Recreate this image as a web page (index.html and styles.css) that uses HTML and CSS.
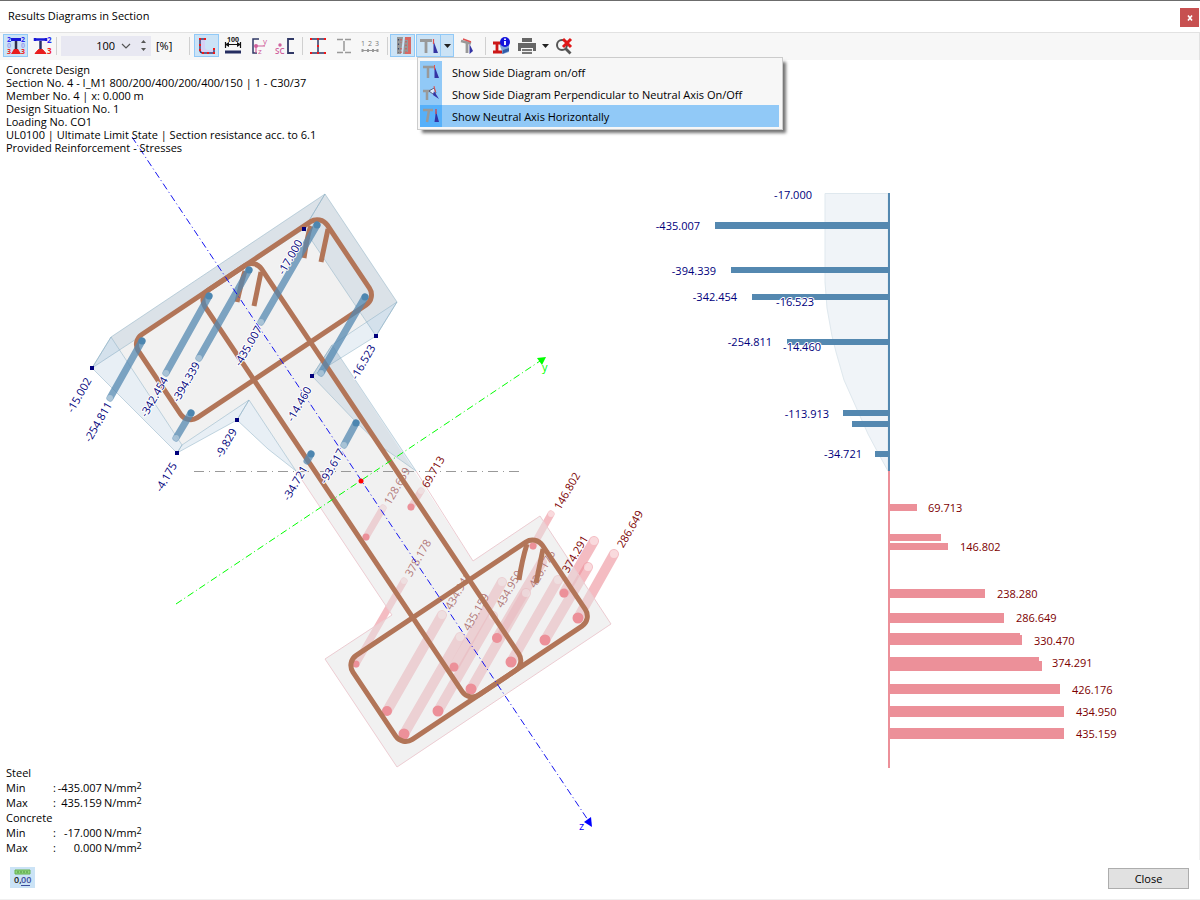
FILE: index.html
```html
<!DOCTYPE html>
<html lang="en">
<head>
<meta charset="utf-8">
<title>Results Diagrams in Section</title>
<link rel="stylesheet" href="styles.css">
</head>
<body>
<div class="window">
  <header class="titlebar">
    <h1 class="title">Results Diagrams in Section</h1>
    <button class="close-x" aria-label="Close window"><svg width="6" height="6" viewBox="0 0 6 6"><path d="M1 .5 5 5.500M5 .5 1 5.500" stroke="#fff" stroke-width="1.600"/></svg></button>
  </header>

  <div class="toolbar" role="toolbar" aria-label="Diagram tools">
    <button class="tool on" aria-label="Show values on all points">
      <svg width="20" height="20" viewBox="0 0 20 20"><path d="M5 3.500h10" stroke="#1818d8" stroke-width="3"/><path d="M10 5v8" stroke="#30304c" stroke-width="2.500"/><path d="M5 18 8 13h4l3 5z" fill="#e81c1c"/><g font-size="7" font-weight="700"><text x="1" y="6" fill="#2a2af0">2</text><text x="15" y="6" fill="#2a2af0">2</text><text x="1" y="12" fill="#9aa0ee">0</text><text x="15" y="12" fill="#9aa0ee">0</text><text x="1" y="18" fill="#f02020">3</text><text x="15" y="18" fill="#f02020">3</text></g></svg>
    </button>
    <button class="tool" aria-label="Show extreme values">
      <svg width="20" height="20" viewBox="0 0 20 20"><path d="M3 3.500h11M3 2v3M14 2v3" stroke="#1818d8" stroke-width="2.500"/><path d="M8.500 5v8" stroke="#283068" stroke-width="2.500"/><path d="M3 17.500 6.500 13.500h4l3.500 4z" fill="#e81c1c" stroke="#e81c1c"/><g font-size="8" font-weight="700"><text x="15" y="7" fill="#2a2af0">2</text><text x="15" y="18" fill="#f02020">3</text></g></svg>
    </button>
    <span class="sep"></span>
    <div class="zoom-field">
      <input class="zoom-value" type="text" value="100" aria-label="Scale in percent">
      <button class="chevron" aria-label="Choose scale"><svg width="10" height="6" viewBox="0 0 10 6"><path d="M1 1l4 4 4-4" fill="none" stroke="#555" stroke-width="1.200"/></svg></button>
      <span class="spinner">
        <button class="spin" aria-label="Increase"><svg width="5" height="3" viewBox="0 0 5 3"><path d="M0 3h5L2.500 0z" fill="#555"/></svg></button>
        <button class="spin" aria-label="Decrease"><svg width="5" height="3" viewBox="0 0 5 3"><path d="M0 0h5L2.500 3z" fill="#555"/></svg></button>
      </span>
    </div>
    <span class="unit">[%]</span>
    <span class="sep"></span>
    <button class="tool on" aria-label="Show section points">
      <svg width="20" height="20" viewBox="0 0 20 20"><path d="M3 3h5v8q0 3 3 3h6v4H6q-3 0-3-3z" fill="#d4d0f4"/><path d="M8 3H3v11q0 3 3 3h11v-4" fill="none" stroke="#3c3c70" stroke-width="1.500"/><g fill="#f01818"><path d="M2 2h2v2H2zM7 2h2v2H7zM2 8h2v2H2zM2 13h2v2H2zM5 16h2v2H5zM10 16h2v2h-2zM16 16h2v2h-2zM16 12h2v2h-2z"/></g></svg>
    </button>
    <button class="tool" aria-label="Show dimensions">
      <svg width="20" height="20" viewBox="0 0 20 20"><path d="M2 8.500h16M2.500 6v6M17.500 6v6" stroke="#111" stroke-width="1.200"/><path d="M2 8.500l4-2.500v5zM18 8.500l-4-2.500v5z" fill="#111"/><path d="M2 16h16" stroke="#252d60" stroke-width="3"/><text x="10" y="6" font-size="7" font-weight="700" text-anchor="middle" fill="#222">100</text></svg>
    </button>
    <button class="tool" aria-label="Show principal axes">
      <svg width="20" height="20" viewBox="0 0 20 20"><path d="M10 3H4v14h4" fill="none" stroke="#303866" stroke-width="1.500"/><path d="M7 10h9M7 10v7" stroke="#d0609c" stroke-width="1.200"/><circle cx="7" cy="10" r="2" fill="#d0609c"/><g font-size="8" fill="#d0609c"><text x="14" y="8">y</text><text x="9" y="18">z</text></g></svg>
    </button>
    <button class="tool" aria-label="Show shear center">
      <svg width="20" height="20" viewBox="0 0 20 20"><path d="M19 3h-6v14h6" fill="none" stroke="#303866" stroke-width="1.800"/><circle cx="5" cy="9" r="1.700" fill="#d0609c"/><text x="0" y="18" font-size="8" font-weight="600" fill="#d0609c">SC</text></svg>
    </button>
    <span class="sep tight"></span>
    <button class="tool" aria-label="Show elements">
      <svg width="20" height="20" viewBox="0 0 20 20"><path d="M3 3h14M3 17h14M10 3v14" stroke="#303866" stroke-width="1.500"/><g fill="#f01818"><path d="M2 2h2v2H2zM9 2h2v2H9zM16 2h2v2h-2zM9 9h2v2H9zM2 16h2v2H2zM9 16h2v2H9zM16 16h2v2h-2z"/></g></svg>
    </button>
    <button class="tool" aria-label="Show section parts">
      <svg width="20" height="20" viewBox="0 0 20 20"><path d="M3 3.500h6M11 3.500h6M3 16.500h6M11 16.500h6M10 5v10" stroke="#999" stroke-width="1.500"/></svg>
    </button>
    <button class="tool" aria-label="Show numbering">
      <svg width="20" height="20" viewBox="0 0 20 20"><path d="M2 14.500h16" stroke="#999"/><path d="M1.500 13h2v3h-2zM7 13h2v3H7zM12 13h2v3h-2zM16.500 13h2v3h-2z" fill="#999"/><g font-size="7" fill="#777"><text x="1" y="10">1</text><text x="8" y="10">2</text><text x="15" y="10">3</text></g></svg>
    </button>
    <span class="sep tight"></span>
    <button class="tool on" aria-label="Show reinforcement">
      <svg width="20" height="20" viewBox="0 0 20 20"><path d="M4 1h6L8 18H4zM12 1h6v17h-8z" fill="#979797"/><path d="M18 1v17h-6v-2h3V4h-3V1z" fill="#d86864"/><path d="M5.500 3v14" stroke="#3c4664" stroke-width="1.200" stroke-dasharray="1.500 3"/><path d="M8 3v4M8 12v5M13 5v11" stroke="#d05050" stroke-width="1.200" stroke-dasharray="1.500 2"/></svg>
    </button>
    <div class="split">
      <button class="tool on" aria-label="Side diagram">
        <svg width="20" height="20" viewBox="0 0 20 20"><path d="M1 4.500h12M7 4v13" stroke="#999" stroke-width="2.800"/><path d="M14.500 5 19 17h-4.500z" fill="#3434a4"/><path d="M14.500 3v5" stroke="#e05050" stroke-width="1.200"/></svg>
      </button>
      <button class="drop on" aria-label="Side diagram options" aria-expanded="true"><svg width="7" height="4" viewBox="0 0 7 4"><path d="M0 0h7L3.500 4z" fill="#222"/></svg></button>
      <div class="menu" role="menu">
        <button class="item" role="menuitem"><span class="mark"><svg width="20" height="20" viewBox="0 0 20 20"><path d="M2 5h11M7 4v12" stroke="#999" stroke-width="2.500"/><path d="M13.500 4 18 16h-4.500z" fill="#3434a4"/><path d="M13.500 3v5" stroke="#e05050"/></svg></span>Show Side Diagram on/off</button>
        <button class="item" role="menuitem"><span class="mark"><svg width="20" height="20" viewBox="0 0 20 20"><path d="M2 7h10M6 7v9" stroke="#999" stroke-width="2.500"/><path d="M8 7l5-3 2 5-3 1z" fill="#dfeffc" stroke="#446" stroke-width=".8"/><path d="M13 7l5 8-6-4z" fill="#3434a4"/><path d="M13 2l1.500 6" stroke="#e05050"/></svg></span>Show Side Diagram Perpendicular to Neutral Axis On/Off</button>
        <button class="item current" role="menuitem"><span class="mark"><svg width="20" height="20" viewBox="0 0 20 20"><path d="M2 4h10M8 4 6 16" stroke="#999" stroke-width="2.500"/><path d="M15 5 18 16h-4.500z" fill="#3434a4"/><path d="M15 3v5" stroke="#c05060" stroke-width="1.500"/></svg></span>Show Neutral Axis Horizontally</button>
      </div>
    </div>
    <button class="tool" aria-label="Rotate diagram">
      <svg width="20" height="20" viewBox="0 0 20 20"><path d="M3 5l10 2.500M9 6v11" stroke="#999" stroke-width="2.800"/><path d="M11.500 8l3.500 7-3.500 3z" fill="#3434a4"/><path d="M5 3l8 3" stroke="#e05050" stroke-width="1.500"/></svg>
    </button>
    <span class="sep tight"></span>
    <button class="tool" aria-label="Section information">
      <svg width="20" height="20" viewBox="0 0 20 20"><path d="M8 7h10v9l-6 2z" fill="#7fa4d8"/><path d="M12 14l6-2v3l-7 3z" fill="#315ca8"/><path d="M2 7h8M6 7v9M2 16h9" stroke="#cc1717" stroke-width="2.800"/><circle cx="14" cy="6" r="5" fill="#1414dc"/><path d="M14 5v4M14 2.500v1.500" stroke="#fff" stroke-width="1.800"/></svg>
    </button>
    <button class="tool" aria-label="Print">
      <svg width="20" height="20" viewBox="0 0 20 20"><path d="M5 2h10v4H5zM1 7h18v8h-3v-3H4v3H1z" fill="#666"/><path d="M5 13h10v5H5z" fill="#777"/><path d="M5 15.500h10" stroke="#eee"/></svg>
    </button>
    <button class="drop slim" aria-label="Print options"><svg width="7" height="4" viewBox="0 0 7 4"><path d="M0 0h7L3.500 4z" fill="#222"/></svg></button>
    <button class="tool" aria-label="Reset zoom">
      <svg width="20" height="20" viewBox="0 0 20 20"><circle cx="8" cy="9" r="5" fill="none" stroke="#555" stroke-width="2"/><path d="M11.500 12.500l5 5" stroke="#555" stroke-width="2.800"/><path d="M9 3l8 8M17 3l-8 8" stroke="#e01818" stroke-width="3"/></svg>
    </button>
  </div>

  <main class="stage">
    <svg class="plot" viewBox="0 60 1200 800" role="img" aria-label="Stress diagrams of the section">
      <!-- tension bars, seen through the section face -->
      <g class="rod tension">
        <path d="M411 507 421 491M366 537 383 508M356 664 404 581M533 546 551 514"/>
      </g>
      <g class="rod tension thick">
        <path d="M387 711 442 615"/><path d="M404 734 460 637"/><path d="M438 711 493 616"/><path d="M454 667 502 582"/><path d="M471 689 526 593"/><path d="M497 638 542 562"/><path d="M511 662 558 580"/><path d="M545 640 588 567"/><path d="M564 593 594 541"/><path d="M578 618 614 554"/>
      </g>
      <g class="cap">
        <circle cx="421" cy="491" r="3"/><circle cx="383" cy="508" r="3"/><circle cx="404" cy="581" r="3"/><circle cx="551" cy="514" r="3"/>
        <circle cx="442" cy="615" r="4"/><circle cx="460" cy="637" r="4"/><circle cx="493" cy="616" r="4"/><circle cx="502" cy="582" r="4"/><circle cx="526" cy="593" r="4"/><circle cx="558" cy="580" r="4"/><circle cx="588" cy="567" r="4"/><circle cx="594" cy="541" r="4"/><circle cx="614" cy="554" r="4"/>
      </g>
      <g class="label red slanted">
        <text transform="translate(397 486) rotate(-60)" dy="4">128.659</text>
        <text transform="translate(418 558) rotate(-60)" dy="4">378.178</text>
        <text transform="translate(458 591) rotate(-60)" dy="4">434.941</text>
        <text transform="translate(476 612) rotate(-60)" dy="4">435.159</text>
        <text transform="translate(509 589) rotate(-60)" dy="4">434.950</text>
        <text transform="translate(542 569) rotate(-60)" dy="4">426.176</text>
      </g>

      <!-- section face and outline -->
      <path class="face" d="M111 337 325 194 397 302 332 345 473 561 540 516 611 624 397 767 325 659 392 615 249 400 182 445z"/>
      <path class="edge" d="M416 471 473 561 540 516 611 624 397 767 325 659 392 615 296 471"/>

      <!-- concrete stress surfaces -->
      <g class="stress">
        <path d="M111 337 325 194 304 229 92 368z"/>
        <path d="M325 194 397 302 376 336 304 229z"/>
        <path d="M397 302 332 345 312 376 376 336z"/>
        <path d="M332 345 416 471 382 447 356 422 312 376z"/>
        <path d="M111 337 182 445 177 453 92 368z"/>
        <path d="M182 445 249 400 237 420 177 453z"/>
        <path d="M249 400 296 471 268 449 237 420z"/>
      </g>
      <path class="neutral" d="M194 471.500H519"/>

      <g class="dots">
        <circle cx="411" cy="507" r="3.500"/><circle cx="366" cy="537" r="3.500"/><circle cx="356" cy="664" r="3.500"/><circle cx="533" cy="546" r="3.500"/>
        <circle cx="387" cy="711" r="5"/><circle cx="404" cy="734" r="5.500"/><circle cx="438" cy="711" r="5.500"/><circle cx="454" cy="667" r="4.500"/><circle cx="471" cy="689" r="5.500"/><circle cx="497" cy="638" r="5"/><circle cx="511" cy="662" r="5.500"/><circle cx="545" cy="640" r="5.500"/><circle cx="564" cy="593" r="4.500"/><circle cx="578" cy="618" r="5.500"/>
      </g>

      <!-- stirrups in the local axes of the section -->
      <g class="stirrup">
        <g transform="translate(111 337) rotate(-33.750)">
          <rect x="15" y="15" width="227" height="100" rx="12"/>
          <rect x="15" y="401" width="228" height="101" rx="12"/>
          <rect x="95" y="15" width="68" height="487" rx="12"/>
        </g>
        <path d="M311 226Q308 232 304 258M328 229 321 262M245 271Q242 280 237 302M261 272 254 306M527 544Q522 560 519 580M543 549 536 583"/>
      </g>

      <g class="rod compression">
        <path d="M142 341 110 398"/><path d="M209 296 166 373"/><path d="M249 270 199 358"/><path d="M317 225 261 322"/><path d="M365 297 321 373"/><path d="M191 413 176 438"/><path d="M311 454 307 461"/><path d="M356 423 344 445"/>
      </g>
      <g class="cap soft">
        <circle cx="110" cy="398" r="3"/><circle cx="166" cy="373" r="3"/><circle cx="199" cy="358" r="3"/><circle cx="261" cy="322" r="3"/><circle cx="321" cy="373" r="3"/><circle cx="176" cy="438" r="3"/><circle cx="344" cy="445" r="3"/>
      </g>
      <g class="heads">
        <circle cx="142" cy="341" r="3.500"/><circle cx="209" cy="296" r="3.500"/><circle cx="249" cy="270" r="3.500"/><circle cx="317" cy="225" r="3.500"/><circle cx="365" cy="297" r="3.500"/><circle cx="191" cy="413" r="3.500"/><circle cx="311" cy="454" r="3.500"/><circle cx="356" cy="423" r="3.500"/>
      </g>

      <!-- section axes -->
      <path class="axis-y" d="M176 604 540 361"/>
      <path d="M546 357 537 358 542 365z" fill="#0f0"/>
      <path class="axis-z" d="M132 137 588 820"/>
      <path d="M592 827 591 817 584 822z" fill="#00f"/>
      <circle cx="361" cy="481" r="2.500" fill="#f00"/>
      <g class="label"><text x="542" y="371" fill="#0f0">y</text><text x="579" y="830" fill="#00f">z</text></g>

      <path class="points" d="M90 366h4v4h-4zM302 227h4v4h-4zM374 334h4v4h-4zM310 374h4v4h-4zM235 418h4v4h-4zM175 451h4v4h-4z"/>
      <g class="label blue slanted">
        <text transform="translate(79 395) rotate(-60)" dy="4">-15.002</text>
        <text transform="translate(98 422) rotate(-60)" dy="4">-254.811</text>
        <text transform="translate(154 397) rotate(-60)" dy="4">-342.454</text>
        <text transform="translate(186 382) rotate(-60)" dy="4">-394.339</text>
        <text transform="translate(166 477) rotate(-60)" dy="4">-4.175</text>
        <text transform="translate(226 443) rotate(-60)" dy="4">-9.829</text>
        <text transform="translate(290 257) rotate(-60)" dy="4">-17.000</text>
        <text transform="translate(248 346) rotate(-60)" dy="4">-435.007</text>
        <text transform="translate(363 362) rotate(-60)" dy="4">-16.523</text>
        <text transform="translate(299 404) rotate(-60)" dy="4">-14.460</text>
        <text transform="translate(332 466) rotate(-60)" dy="4">-93.617</text>
        <text transform="translate(295 483) rotate(-60)" dy="4">-34.721</text>
      </g>
      <g class="label red slanted">
        <text transform="translate(433 472) rotate(-60)" dy="4">69.713</text>
        <text transform="translate(575 554) rotate(-60)" dy="4">374.291</text>
        <text transform="translate(567 491) rotate(-60)" dy="4">146.802</text>
        <text transform="translate(630 529) rotate(-60)" dy="4">286.649</text>
      </g>

      <!-- side diagram -->
      <path class="area" d="M825 193.500h63V471L876 449 868 434 856 407 844 380 836 352 832 336 827 308 825 282z"/>
      <g fill="#5488b0">
        <path d="M888 193h2v278h-2z"/>
        <path d="M715 222h174v7H715zM731 267h158v6H731zM752 294h137v6H752zM787 339h102v6H787zM843 410h46v6h-46zM852 421h37v6h-37zM875 451h14v6h-14z"/>
      </g>
      <g fill="#ec9099">
        <path d="M888 471h2v297h-2z"/>
        <path d="M889 504h28v7h-28zM889 534h52v7h-52zM889 543h59v7h-59zM889 589h96v9h-96zM889 613h115v10H889zM889 633h131v2h2v10H889zM889 657h150v4h3v10H889zM889 684h171v10H889zM889 706h175v11H889zM889 728h175v11H889z"/>
      </g>
      <g class="label blue ends">
        <text x="812" y="199">-17.000</text><text x="700" y="230">-435.007</text><text x="716" y="275">-394.339</text><text x="737" y="301">-342.454</text><text x="814" y="306">-16.523</text><text x="772" y="346">-254.811</text><text x="821" y="351">-14.460</text><text x="829" y="418">-113.913</text><text x="862" y="458">-34.721</text>
      </g>
      <g class="label red">
        <text x="928" y="512">69.713</text><text x="960" y="551">146.802</text><text x="997" y="598">238.280</text><text x="1016" y="622">286.649</text><text x="1034" y="645">330.470</text><text x="1052" y="667">374.291</text><text x="1072" y="694">426.176</text><text x="1076" y="716">434.950</text><text x="1076" y="738">435.159</text>
      </g>
    </svg>

    <section class="info">
      <p>Concrete Design</p>
      <p>Section No. 4 - I_M1 800/200/400/200/400/150 | 1 - C30/37</p>
      <p>Member No. 4 | x: 0.000 m</p>
      <p>Design Situation No. 1</p>
      <p>Loading No. CO1</p>
      <p>UL0100 | Ultimate Limit State | Section resistance acc. to 6.1</p>
      <p>Provided Reinforcement - Stresses</p>
    </section>

    <table class="legend">
      <tbody>
        <tr><th colspan="4">Steel</th></tr>
        <tr><th>Min</th><td>:</td><td class="num">-435.007</td><td class="dim">N/mm<sup>2</sup></td></tr>
        <tr><th>Max</th><td>:</td><td class="num">435.159</td><td class="dim">N/mm<sup>2</sup></td></tr>
        <tr><th colspan="4">Concrete</th></tr>
        <tr><th>Min</th><td>:</td><td class="num">-17.000</td><td class="dim">N/mm<sup>2</sup></td></tr>
        <tr><th>Max</th><td>:</td><td class="num">0.000</td><td class="dim">N/mm<sup>2</sup></td></tr>
      </tbody>
    </table>
  </main>

  <footer class="footer">
    <button class="decimals" aria-label="Units and decimal places">
      <svg width="19" height="18" viewBox="0 0 19 18"><path d="M2 1h15v4H2z" fill="#8ed47c" stroke="#64b050"/><path d="M5 2v2M8 2v2M11 2v2M14 2v2" stroke="#4c9440"/><text x="1" y="14" font-size="9" font-weight="600" fill="#222">0,</text><text x="8" y="14" font-size="9" font-weight="600" fill="#3c4c9c">00</text><path d="M8 16.500h9" stroke="#3c4c9c"/></svg>
    </button>
    <button class="close">Close</button>
  </footer>
</div>
</body>
</html>
```
FILE: styles.css
```css
* { box-sizing: border-box; }

body {
  margin: 0;
  font: 11px/13px "Open Sans", "Noto Sans", sans-serif;
  color: #000;
  background: #fff;
}

button {
  margin: 0;
  padding: 0;
  border: 0;
  background: transparent;
  font: inherit;
  color: inherit;
}

svg {
  display: block;
  overflow: visible;
}

.window {
  display: flex;
  flex-direction: column;
  min-height: 100vh;
  border-top: 1px solid #6c6c6c;
}

.titlebar {
  display: flex;
  align-items: center;
  justify-content: space-between;
  height: 31px;
  padding: 0 1px 2px 8px;
}

.title {
  margin: 0;
  font-size: 11px;
  font-weight: 400;
}

.close-x {
  display: grid;
  place-items: center;
  width: 19px;
  height: 19px;
  margin-top: 4px;
  background: #c75050;
}

/* toolbar */
.toolbar {
  display: flex;
  align-items: center;
  gap: 1px;
  height: 28px;
  padding: 0 3px 2px;
  border-top: 1px solid #e2e2e2;
  border-right: 1px solid #e2e2e2;
  background: #f7f7f7;
}

.tool {
  display: grid;
  place-items: center;
  width: 25px;
  height: 23px;
  border: 1px solid transparent;
}

.drop {
  display: grid;
  place-items: center;
  width: 13px;
  height: 23px;
  border: 1px solid transparent;
}

.slim { width: 10px; }

.on {
  border-color: #91c9f7;
  background: #cbe3f6;
}

.sep {
  width: 1px;
  height: 18px;
  margin: 0 3px 0 1px;
  background: #d0d0d0;
}

.tight { margin: 0 1px 0 4px; }

.zoom-field {
  display: flex;
  align-items: center;
  width: 90px;
  height: 20px;
  background: #e8e8f2;
}

.zoom-value {
  flex: 1;
  min-width: 0;
  padding: 0;
  border: 0;
  background: transparent;
  font: inherit;
  text-align: right;
}

.chevron {
  display: grid;
  place-items: center;
  width: 22px;
  height: 20px;
}

.spinner {
  display: flex;
  flex-direction: column;
  gap: 1px;
  width: 14px;
  padding-right: 2px;
}

.spin {
  display: grid;
  place-items: center;
  height: 7px;
}

.unit {
  width: 35px;
  padding-left: 4px;
}

.split {
  position: relative;
  display: flex;
}

.split .drop { border-left: 0; }

.menu {
  position: absolute;
  z-index: 2;
  top: 100%;
  left: 1px;
  width: 366px;
  padding: 3px 2px 2px;
  border: 1px solid #ccc;
  background: #f7f7f7;
  box-shadow: 4px 4px 3px -1px rgba(0, 0, 0, 0.55);
}

.item {
  display: flex;
  align-items: center;
  gap: 10px;
  width: 359px;
  height: 22px;
  white-space: nowrap;
  text-align: left;
}

.mark {
  display: grid;
  place-items: center;
  width: 22px;
  height: 22px;
  background: #91c9f7;
}

.current { background: #91c9f7; }
.current .mark { background: #56b0fa; }

/* drawing area */
.stage {
  display: grid;
  flex: 1;
  grid-template-rows: minmax(0, 1fr);
  min-height: 0;
  box-shadow: inset -1px 0 #f0f0f0;
}

.plot,
.info,
.legend { grid-area: 1 / 1; }

.plot {
  width: 100%;
  height: 100%;
}

.info {
  align-self: start;
  justify-self: start;
  padding: 3px 6px;
}

.info p { margin: 0; }

.legend {
  align-self: end;
  justify-self: start;
  margin: 0 6px 5px;
  border-collapse: collapse;
  line-height: 15px;
}

.legend th,
.legend td {
  height: 15px;
  padding: 0;
  font-weight: 400;
  text-align: left;
}

.legend tr > th { width: 47px; }
.legend .num { width: 46px; text-align: right; }
.legend .dim { padding-left: 2px; }
.legend sup { font-size: 9px; line-height: 1px; vertical-align: 3px; }

.face { fill: #e4e4e4; fill-opacity: 0.5; }
.edge { fill: none; stroke: #ecccd2; }
.stress { fill: #5080b0; fill-opacity: 0.13; stroke: #8cb0c4; stroke-opacity: 0.5; }
.area { fill: #f0f4f8; stroke: #dfe8ee; }
.neutral { fill: none; stroke: #999; stroke-dasharray: 10 5 1 5; }

.rod { fill: none; stroke-linecap: round; }
.tension { stroke: #ec9099; stroke-opacity: 0.6; stroke-width: 7px; }
.thick { stroke-width: 10px; }
.compression { stroke: #5488b0; stroke-opacity: 0.75; stroke-width: 7px; }
.cap { fill: #fff; fill-opacity: 0.45; }
.soft { fill-opacity: 0.35; }
.dots { fill: #ec9099; }
.heads { fill: #4d86b0; }

.stirrup { fill: none; stroke: #b27558; stroke-width: 5px; }
.axis-y { stroke: #0f0; stroke-dasharray: 7 3 1 3; }
.axis-z { stroke: #1414f0; stroke-dasharray: 7 3 1 3; }
.points { fill: #00007c; }

.label { font-size: 11px; }
.blue { fill: #00007c; stroke: #fff; stroke-width: 2px; stroke-linejoin: round; paint-order: stroke; }
.red { fill: #7c0000; }
.slanted { text-anchor: middle; }
.ends { text-anchor: end; }

/* footer */
.footer {
  display: flex;
  align-items: flex-start;
  justify-content: space-between;
  height: 40px;
  padding: 7px 11px 0 10px;
  border-bottom: 1px solid #f0f0f0;
}

.decimals {
  display: grid;
  place-items: center;
  width: 25px;
  height: 21px;
  background: #cbe3f6;
}

.close {
  width: 81px;
  height: 21px;
  margin-top: 1px;
  border: 1px solid #adadad;
  background: #e1e1e1;
}
```
